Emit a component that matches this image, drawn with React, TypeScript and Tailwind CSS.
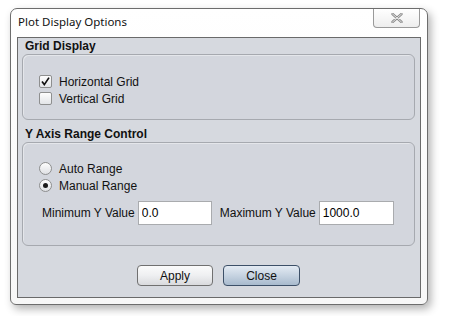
import type { FC, ReactNode } from 'react'

/** Gruppenrahmen mit fetter Überschrift (Java-Look). */
const Group: FC<{ title: string; className?: string; children: ReactNode }> = ({ title, className = '', children }) => (
  <div className="flex flex-col">
    <div className="flex h-[16px] items-center pl-[3px] text-[12px] font-bold leading-none text-[#111]">{title}</div>
    <div
      className={`rounded-[6px] border border-[#a6a9af] bg-[#d3d6dd] shadow-[inset_1px_1px_0_#e4e6ea] ${className}`}
    >
      {children}
    </div>
  </div>
)

const CheckRow: FC<{ label: string; checked?: boolean }> = ({ label, checked }) => (
  <div className="flex h-[17px] items-center">
    <span className="flex h-[13px] w-[13px] items-center justify-center rounded-[2px] border border-[#8e8f8f] bg-gradient-to-b from-[#fdfdfd] to-[#e3e5e8]">
      {checked && (
        <svg width="11" height="11" viewBox="0 0 11 11" aria-hidden="true">
          <path d="M2 5.6 L4.3 8.6 L9 1.6" fill="none" stroke="#111" strokeWidth="1.7" />
        </svg>
      )}
    </span>
    <span className="ml-[7px] text-[12px] text-[#111]">{label}</span>
  </div>
)

const RadioRow: FC<{ label: string; selected?: boolean }> = ({ label, selected }) => (
  <div className="flex h-[17px] items-center">
    <span className="flex h-[13px] w-[13px] items-center justify-center rounded-full border border-[#8e8f8f] bg-gradient-to-b from-[#fdfdfd] to-[#dfe1e4]">
      {selected && <span className="h-[5px] w-[5px] rounded-full bg-[#1a1a1a]" />}
    </span>
    <span className="ml-[7px] text-[12px] text-[#111]">{label}</span>
  </div>
)

const ValueField: FC<{ label: string; value: string; width: string }> = ({ label, value, width }) => (
  <div className="flex items-center">
    <span className="mr-[3px] text-[12px] text-[#111]">{label}</span>
    <input
      readOnly
      value={value}
      className={`h-[24px] ${width} border border-[#a9abae] bg-white px-[3px] text-[12px] text-black outline-none`}
    />
  </div>
)

export default function App() {
  return (
    <div className="h-[316px] w-[450px] bg-white pl-[10px] pt-[8px] font-['Liberation_Sans',Arial,sans-serif]">
      <div className="flex h-[297px] w-[418px] flex-col rounded-t-[7px] rounded-b-[6px] border border-[#6d6d6d] bg-gradient-to-b from-white to-[#f7f7f7] px-[6px] pb-[6px] shadow-[3px_4px_8px_rgba(0,0,0,0.3)]">
        {/* Titelleiste */}
        <div className="flex h-[28px] items-start justify-between">
          <span className="pl-[1px] pt-[5px] font-['Noto_Sans',sans-serif] text-[11.5px] leading-[16px] text-[#111]">
            Plot Display Options
          </span>
          <button
            type="button"
            aria-label="Close"
            className="mr-[1px] flex h-[19px] w-[47px] items-center justify-center rounded-b-[4px] border border-t-0 border-[#9a9a9a] bg-gradient-to-b from-white to-[#eeeeee]"
          >
            <svg width="12" height="10" viewBox="0 0 12 10" aria-hidden="true">
              <path d="M1.5 1 L10.5 9 M10.5 1 L1.5 9" stroke="#8a8a8a" strokeWidth="2.4" strokeLinecap="round" />
              <path d="M1.5 1 L10.5 9 M10.5 1 L1.5 9" stroke="#fafafa" strokeWidth="0.8" strokeLinecap="round" />
            </svg>
          </button>
        </div>

        {/* Inhalt */}
        <div className="flex flex-1 flex-col border border-[#6a6a6a] bg-[#d6d9df] pl-[4px] pr-[5px]">
          <div className="pt-[0px]">
            <Group title="Grid Display" className="h-[66px] pl-[16px] pt-[18px]">
              <CheckRow label="Horizontal Grid" checked />
              <CheckRow label="Vertical Grid" />
            </Group>
          </div>

          <div className="mt-[6px]">
            <Group title="Y Axis Range Control" className="h-[104px] pl-[16px] pt-[17px]">
              <RadioRow label="Auto Range" />
              <RadioRow label="Manual Range" selected />
              <div className="ml-[3px] mt-[7px] flex items-center gap-[8px]">
                <ValueField label="Minimum Y Value" value="0.0" width="w-[74px]" />
                <ValueField label="Maximum Y Value" value="1000.0" width="w-[75px]" />
              </div>
            </Group>
          </div>

          <div className="mt-[19px] flex justify-center gap-[10px]">
            <button
              type="button"
              className="h-[21px] w-[76px] rounded-[4px] border border-[#707070] bg-gradient-to-b from-[#fbfbfb] via-[#eeeff1] to-[#d9dadd] text-[12px] text-[#111]"
            >
              Apply
            </button>
            <button
              type="button"
              className="h-[21px] w-[77px] rounded-[4px] border border-[#3d5068] bg-gradient-to-b from-[#e4ebf3] via-[#c6d3e1] to-[#a8bacd] text-[12px] text-[#111]"
            >
              Close
            </button>
          </div>
        </div>
      </div>
    </div>
  )
}
